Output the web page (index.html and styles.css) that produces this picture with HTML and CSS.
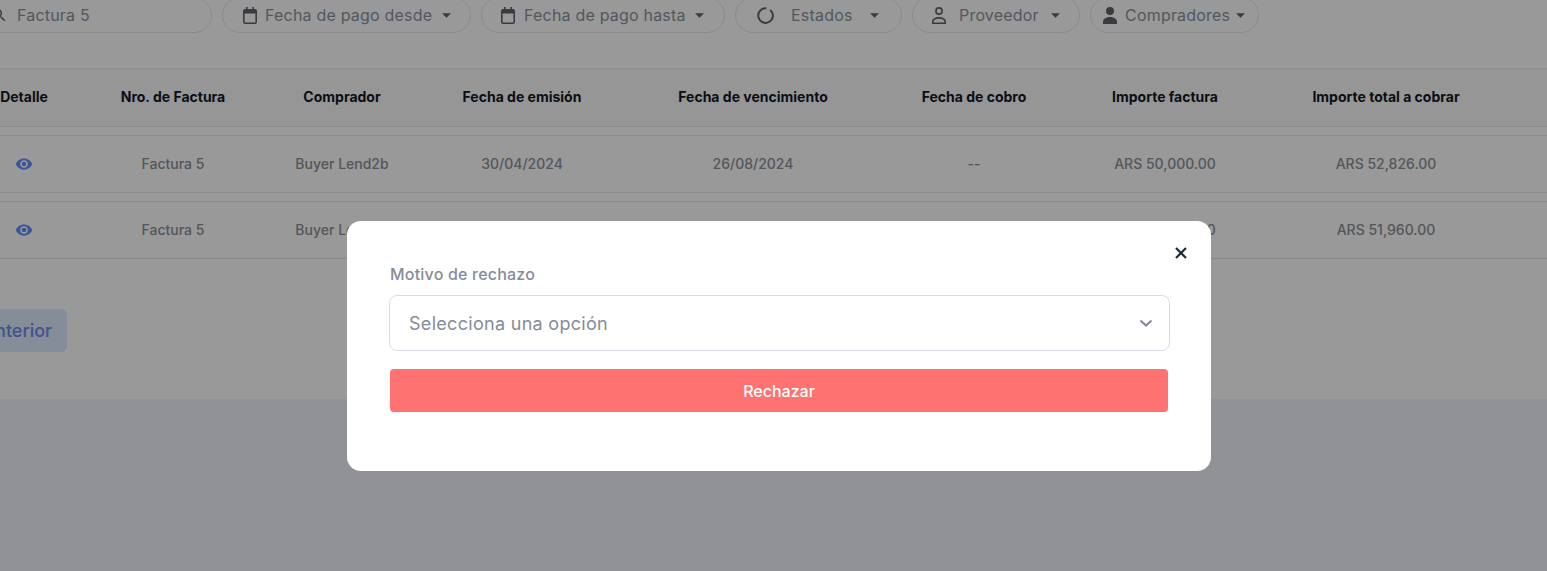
FILE: index.html
```html
<!DOCTYPE html>
<html lang="es">
<head>
    <meta charset="UTF-8">
    <meta name="viewport" content="width=device-width, initial-scale=1.0">
    <title>Facturas</title>
    <link rel="stylesheet" href="styles.css">
</head>
<body>
    <div class="panel">
        <div class="filters">
            <div class="pill pill-search">
                <svg class="icon-search" viewBox="0 0 24 24"><path d="M15.5 14h-.79l-.28-.27A6.47 6.47 0 0 0 16 9.5 6.5 6.5 0 1 0 9.5 16c1.61 0 3.09-.59 4.23-1.57l.27.28v.79l5 4.99L20.49 19l-4.99-5zm-6 0C7.01 14 5 11.99 5 9.5S7.01 5 9.5 5 14 7.01 14 9.5 11.99 14 9.5 14z"/></svg>
                <span>Factura 5</span>
            </div>
            <div class="pill pill-desde">
                <svg class="icon" viewBox="0 0 14 17"><path d="M3 0h1.6v2h4.8V0H11v2h1a2 2 0 0 1 2 2v11a2 2 0 0 1-2 2H2a2 2 0 0 1-2-2V4a2 2 0 0 1 2-2h1V0zM1.6 6.5V15c0 .2.2.4.4.4h10c.2 0 .4-.2.4-.4V6.5H1.6z"/></svg>
                <span>Fecha de pago desde</span>
                <svg class="caret" viewBox="0 0 10 5"><path d="M0 0h10L5 5z"/></svg>
            </div>
            <div class="pill pill-hasta">
                <svg class="icon" viewBox="0 0 14 17"><path d="M3 0h1.6v2h4.8V0H11v2h1a2 2 0 0 1 2 2v11a2 2 0 0 1-2 2H2a2 2 0 0 1-2-2V4a2 2 0 0 1 2-2h1V0zM1.6 6.5V15c0 .2.2.4.4.4h10c.2 0 .4-.2.4-.4V6.5H1.6z"/></svg>
                <span>Fecha de pago hasta</span>
                <svg class="caret" viewBox="0 0 10 5"><path d="M0 0h10L5 5z"/></svg>
            </div>
            <div class="pill pill-estados">
                <svg class="icon-ring" viewBox="0 0 17 17"><path d="M13.2 2.9A7.3 7.3 0 1 1 9.4 1.3"/></svg>
                <span>Estados</span>
                <svg class="caret" viewBox="0 0 10 5"><path d="M0 0h10L5 5z"/></svg>
            </div>
            <div class="pill pill-proveedor">
                <svg class="icon-outline" viewBox="0 0 14 17"><circle cx="7" cy="4" r="3.1"/><path d="M.8 16.2v-1.7c0-2.3 3.4-3.6 6.2-3.6s6.2 1.3 6.2 3.6v1.7z"/></svg>
                <span>Proveedor</span>
                <svg class="caret" viewBox="0 0 10 5"><path d="M0 0h10L5 5z"/></svg>
            </div>
            <div class="pill pill-compradores">
                <svg class="icon" viewBox="0 0 14 17"><circle cx="7" cy="4" r="4"/><path d="M0 17v-2.5c0-2.8 4-4.5 7-4.5s7 1.700 7 4.500V17z"/></svg>
                <span>Compradores</span>
                <svg class="caret" viewBox="0 0 10 5"><path d="M0 0h10L5 5z"/></svg>
            </div>
        </div>

        <table class="invoices">
            <colgroup>
                <col class="col-detalle">
                <col class="col-numero">
                <col class="col-comprador">
                <col class="col-emision">
                <col class="col-vencimiento">
                <col class="col-cobro">
                <col class="col-importe">
                <col class="col-total">
                <col class="col-resto">
            </colgroup>
            <thead>
                <tr>
                    <th>Detalle</th>
                    <th>Nro. de Factura</th>
                    <th>Comprador</th>
                    <th>Fecha de emisión</th>
                    <th>Fecha de vencimiento</th>
                    <th>Fecha de cobro</th>
                    <th>Importe factura</th>
                    <th>Importe total a cobrar</th>
                    <th></th>
                </tr>
            </thead>
            <tbody>
                <tr>
                    <td><svg class="eye" viewBox="0 0 24 24"><path d="M12 4.5C7 4.5 2.73 7.61 1 12c1.73 4.39 6 7.5 11 7.5s9.27-3.11 11-7.5c-1.73-4.39-6-7.5-11-7.5zM12 17a5 5 0 1 1 0-10 5 5 0 0 1 0 10zm0-8a3 3 0 1 0 0 6 3 3 0 0 0 0-6z"/></svg></td>
                    <td>Factura 5</td>
                    <td>Buyer Lend2b</td>
                    <td>30/04/2024</td>
                    <td>26/08/2024</td>
                    <td>--</td>
                    <td>ARS 50,000.00</td>
                    <td>ARS 52,826.00</td>
                    <td></td>
                </tr>
                <tr>
                    <td><svg class="eye" viewBox="0 0 24 24"><path d="M12 4.5C7 4.5 2.73 7.61 1 12c1.73 4.39 6 7.5 11 7.5s9.27-3.11 11-7.5c-1.73-4.39-6-7.5-11-7.5zM12 17a5 5 0 1 1 0-10 5 5 0 0 1 0 10zm0-8a3 3 0 1 0 0 6 3 3 0 0 0 0-6z"/></svg></td>
                    <td>Factura 5</td>
                    <td>Buyer Lend2b</td>
                    <td>30/04/2024</td>
                    <td>26/08/2024</td>
                    <td>--</td>
                    <td>ARS 50,000.00</td>
                    <td>ARS 51,960.00</td>
                    <td></td>
                </tr>
            </tbody>
        </table>

        <div class="pagination">
            <button class="page-btn">Anterior</button>
        </div>
    </div>

    <div class="overlay">
        <div class="modal">
            <button class="modal-close" aria-label="Cerrar">
                <svg viewBox="0 0 14 14"><path d="M2 2l10 10m0-10L2 12"/></svg>
            </button>
            <label class="modal-label">Motivo de rechazo</label>
            <div class="modal-select">
                <span>Selecciona una opción</span>
                <svg class="chevron" viewBox="0 0 14 8"><path d="M1.5 1.5L7 6.500l5.500-5"/></svg>
            </div>
            <button class="reject-btn">Rechazar</button>
        </div>
    </div>
</body>
</html>
```

FILE: styles.css
```css
body {
    margin: 0;
    height: 571px;
    overflow: hidden;
    background: #f1f3f9;
    font-family: Inter, 'Liberation Sans', sans-serif;
}

.panel {
    background: white;
    height: 402px;
    margin: -3px 0 0 -24px;
    width: 1571px;
}

/* filters */
.filters {
    display: flex;
    gap: 10px;
    margin-bottom: 35px;
}

.pill {
    display: flex;
    align-items: center;
    box-sizing: border-box;
    height: 36px;
    border: 1px solid #e5e7eb;
    border-radius: 18px;
    font-size: 16px;
    color: #8b92a0;
    letter-spacing: 0.2px;
}

.pill span {
    white-space: nowrap;
}

.pill .icon, .pill .icon-outline {
    width: 14px;
    height: 17px;
    flex-shrink: 0;
}

.pill .icon {
    fill: #5f636b;
}

.pill .icon-outline {
    fill: none;
    stroke: #5f636b;
    stroke-width: 1.6;
}

.pill .icon-ring {
    width: 17px;
    height: 17px;
    flex-shrink: 0;
    fill: none;
    stroke: #5f636b;
    stroke-width: 2;
}

.pill .icon-search {
    width: 18px;
    height: 18px;
    flex-shrink: 0;
    fill: #5f636b;
}

.pill .caret {
    width: 9px;
    height: 5px;
    fill: #5f636b;
    flex-shrink: 0;
}

.pill-search {
    width: 236px;
    padding-left: 13px;
    gap: 9px;
}

.pill-desde {
    width: 249px;
    padding-left: 20px;
    gap: 8px;
}

.pill-desde .caret {
    margin-left: 2px;
}

.pill-hasta {
    width: 244px;
    padding-left: 19px;
    gap: 9px;
}

.pill-estados {
    width: 167px;
    padding-left: 21px;
    gap: 17px;
}

.pill-proveedor {
    width: 168px;
    padding-left: 19px;
    gap: 13px;
}

.pill-proveedor .caret {
    margin-left: -1px;
}

.pill-compradores {
    width: 169px;
    padding-left: 12px;
    gap: 8px;
}

.pill-compradores .caret {
    margin-left: -2px;
}

/* table */
.invoices {
    width: 1571px;
    table-layout: fixed;
    border-collapse: separate;
    border-spacing: 0;
}

.col-detalle { width: 96px; }
.col-numero { width: 202px; }
.col-comprador { width: 136px; }
.col-emision { width: 224px; }
.col-vencimiento { width: 238px; }
.col-cobro { width: 204px; }
.col-importe { width: 178px; }
.col-total { width: 264px; }
.col-resto { width: 29px; }

.invoices th {
    height: 55px;
    padding: 0 0 2px;
    font-size: 14px;
    font-weight: 700;
    color: #111827;
    background: #fafafa;
    border-top: 1px solid #e5e7eb;
    border-bottom: 1px solid #e5e7eb;
    white-space: nowrap;
}

.invoices td {
    height: 57px;
    padding: 0;
    text-align: center;
    font-size: 14px;
    font-weight: 500;
    color: #8c8f95;
    border-top: 8px solid white;
    border-bottom: 1px solid #e5e7eb;
    box-shadow: inset 0 1px 0 #e5e7eb;
    white-space: nowrap;
}

.eye {
    display: block;
    width: 18px;
    height: 18px;
    margin: 0 auto;
    fill: #5f8fff;
}

.pagination {
    margin-top: 50px;
}

.page-btn {
    display: block;
    box-sizing: border-box;
    height: 43px;
    width: 91px;
    padding: 0 15px 0 0;
    border: none;
    border-radius: 6px;
    background: #dcebfd;
    color: #6f8ae8;
    font-family: inherit;
    font-size: 18px;
    font-weight: 500;
    text-align: right;
    white-space: nowrap;
}

/* modal */
.overlay {
    position: fixed;
    top: 0;
    left: 0;
    width: 100%;
    height: 100%;
    background: rgba(0,0,0,0.4);
}

.modal {
    position: absolute;
    top: 221px;
    left: 347px;
    box-sizing: border-box;
    width: 864px;
    height: 250px;
    padding: 43px 41px 0 42px;
    background: white;
    border-radius: 14px;
}

.modal-close {
    position: absolute;
    top: 25px;
    right: 23px;
    width: 14px;
    height: 14px;
    padding: 0;
    border: none;
    background: none;
}

.modal-close svg {
    display: block;
    fill: none;
    stroke: #1f2937;
    stroke-width: 2.2;
}

.modal-label {
    display: block;
    margin-left: 1px;
    margin-bottom: 11px;
    font-size: 16px;
    font-weight: 500;
    letter-spacing: 0.2px;
    line-height: 20px;
    color: #858c99;
}

.modal-select {
    display: flex;
    align-items: center;
    justify-content: space-between;
    box-sizing: border-box;
    height: 56px;
    padding: 0 16px 0 19px;
    border: 1px solid #d9dce3;
    border-radius: 8px;
    font-size: 18px;
    letter-spacing: 0.3px;
    color: #858c99;
}

.chevron {
    width: 14px;
    height: 8px;
    fill: none;
    stroke: #858c99;
    stroke-width: 2.2;
}

.reject-btn {
    display: block;
    width: 778px;
    height: 43px;
    margin: 18px 0 0 1px;
    border: none;
    border-radius: 4px;
    background: #ff7272;
    color: white;
    font-family: inherit;
    font-size: 16px;
    font-weight: 500;
}
```
